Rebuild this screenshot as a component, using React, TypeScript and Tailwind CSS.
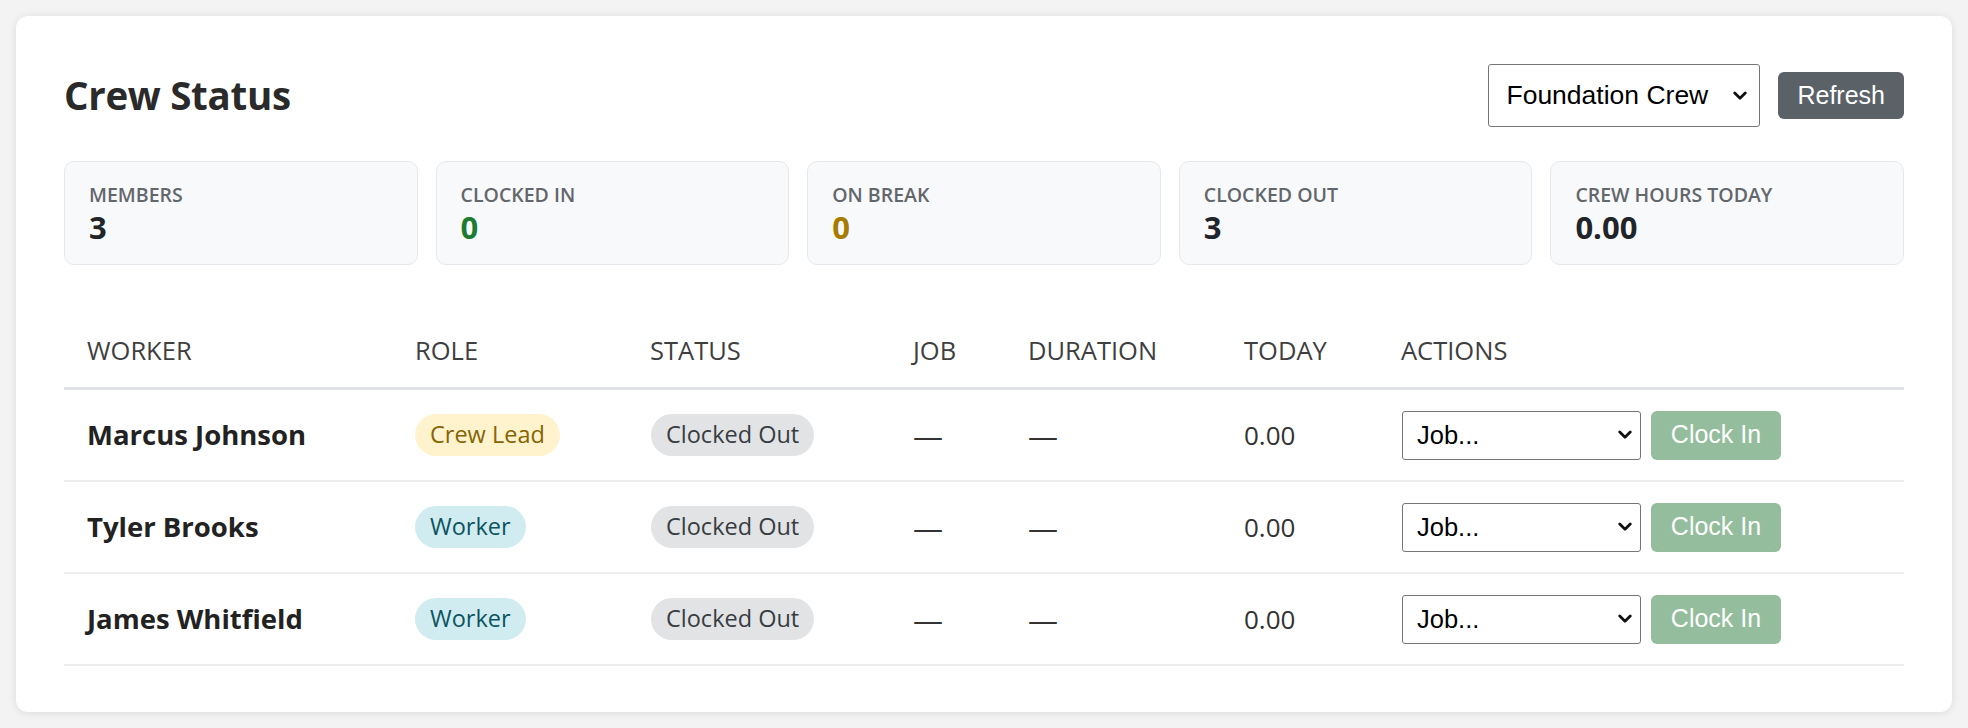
import React from "react";

const stats = [
  { label: "MEMBERS", value: "3", color: "text-[#212529]" },
  { label: "CLOCKED IN", value: "0", color: "text-[#1e7b34]" },
  { label: "ON BREAK", value: "0", color: "text-[#a67c00]" },
  { label: "CLOCKED OUT", value: "3", color: "text-[#212529]" },
  { label: "CREW HOURS TODAY", value: "0.00", color: "text-[#212529]" },
];

const workers = [
  { name: "Marcus Johnson", role: "Crew Lead", lead: true },
  { name: "Tyler Brooks", role: "Worker", lead: false },
  { name: "James Whitfield", role: "Worker", lead: false },
];

const headers = ["WORKER", "ROLE", "STATUS", "JOB", "DURATION", "TODAY", "ACTIONS"];

function Chevron({ className }: { className?: string }) {
  return (
    <svg className={className} viewBox="0 0 12 8" width="14" height="10" fill="none">
      <path d="M1.5 1.5 L6 6 L10.5 1.5" stroke="#111" strokeWidth="2.4" strokeLinecap="round" strokeLinejoin="round" />
    </svg>
  );
}

export default function App() {
  return (
    <div className="min-h-[728px] w-full bg-[#f3f3f3] p-4 font-['Open_Sans',sans-serif]">
      <div className="rounded-[12px] bg-white px-12 pt-12 pb-[46px] shadow-[0_1px_8px_rgba(0,0,0,0.10)]">
        <div className="flex h-[63px] items-center justify-between">
          <h2 className="text-[38.5px] font-bold tracking-[-0.3px] text-[#2a2a2a]">Crew Status</h2>
          <div className="flex items-center gap-[18px]">
            <div className="relative h-[63px] w-[272px] rounded-[3px] border-[1.5px] border-[#767676] bg-white">
              <span className="absolute left-[17px] top-1/2 -translate-y-1/2 font-['Liberation_Sans',Arial,sans-serif] text-[26.5px] text-black">
                Foundation Crew
              </span>
              <Chevron className="absolute right-[12px] top-1/2 -translate-y-1/2" />
            </div>
            <button className="h-[47px] rounded-[6px] bg-[#5a6268] px-[19px] font-['Liberation_Sans',Arial,sans-serif] text-[25px] text-white">
              Refresh
            </button>
          </div>
        </div>

        <div className="mt-[34px] grid grid-cols-5 gap-[18px]">
          {stats.map((s) => (
            <div
              key={s.label}
              className="flex h-[104px] flex-col justify-center rounded-[10px] border-[1.5px] border-[#e6e8eb] bg-[#f8f9fa] px-6"
            >
              <div className="text-[19.5px] font-semibold leading-[27px] text-[#63676c]">{s.label}</div>
              <div className={`text-[31px] font-bold leading-[38px] ${s.color}`}>{s.value}</div>
            </div>
          ))}
        </div>

        <div className="mt-[48px]">
          <div className="grid h-[77px] grid-cols-[328px_235px_263px_115px_216px_157px_1fr] items-center border-b-[3px] border-[#dee2e6]">
            {headers.map((h) => (
              <div key={h} className="pl-[23px] text-[25.5px] text-[#3f3f3f]">
                {h}
              </div>
            ))}
          </div>
          {workers.map((w) => (
            <div
              key={w.name}
              className="grid h-[92px] grid-cols-[328px_235px_263px_115px_216px_157px_1fr] items-center border-b-2 border-[#ebedef] text-[26px] text-[#333]"
            >
              <div className="pl-[23px] text-[27.5px] font-bold text-[#222]">{w.name}</div>
              <div className="pl-[23px]">
                <span
                  className={`inline-flex h-[42px] items-center rounded-full px-[15px] text-[23.5px] font-medium ${
                    w.lead ? "bg-[#fff3cd] text-[#856404]" : "bg-[#d1ecf1] text-[#0c5460]"
                  }`}
                >
                  {w.role}
                </span>
              </div>
              <div className="pl-[24px]">
                <span className="inline-flex h-[42px] items-center rounded-full bg-[#e2e3e5] px-[15px] text-[23.5px] font-medium text-[#383d41]">
                  Clocked Out
                </span>
              </div>
              <div className="pl-[23px] text-[30px]">—</div>
              <div className="pl-[23px] text-[30px]">—</div>
              <div className="pl-[23px]">0.00</div>
              <div className="flex items-center gap-[10px] pl-[24px]">
                <div className="relative h-[49px] w-[239px] rounded-[3px] border-[1.5px] border-[#767676] bg-white">
                  <span className="absolute left-[14px] top-1/2 -translate-y-1/2 font-['Liberation_Sans',Arial,sans-serif] text-[25.5px] text-black">
                    Job...
                  </span>
                  <Chevron className="absolute right-[8px] top-1/2 -translate-y-1/2" />
                </div>
                <button className="h-[49px] w-[130px] rounded-[6px] bg-[#93bd9c] font-['Liberation_Sans',Arial,sans-serif] text-[25px] text-white">
                  Clock In
                </button>
              </div>
            </div>
          ))}
        </div>
      </div>
    </div>
  );
}
